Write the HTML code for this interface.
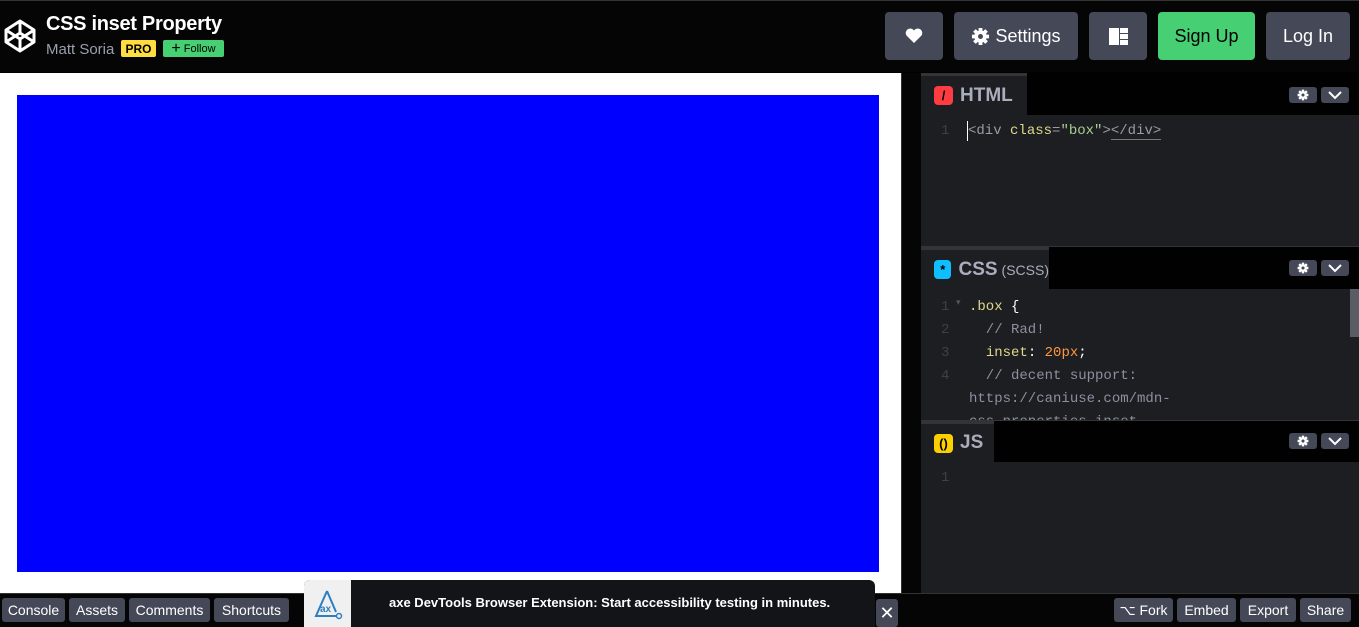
<!DOCTYPE html>
<html><head><meta charset="utf-8">
<style>
*{margin:0;padding:0;box-sizing:border-box}
body{width:1359px;height:627px;overflow:hidden;background:#000;font-family:"Liberation Sans",sans-serif;position:relative}
.a{position:absolute}
.btn{position:absolute;background:#444857;border-radius:4px;color:#fff;display:flex;align-items:center;justify-content:center;font-size:18px}
.mono{font-family:"Liberation Mono",monospace;font-size:14px}
.tab{position:absolute;left:921px;background:#1d1e22;border-top:3px solid #343436;color:#aaaebc;font-weight:bold;font-size:19px;display:flex;align-items:center;padding-left:13px}
.ic{width:19px;height:19px;border-radius:4px;margin-right:7px;display:flex;align-items:center;justify-content:center;font-size:13px;color:#000}
.sb{position:absolute;background:#444857;border-radius:3px;width:28px;height:16px;display:flex;align-items:center;justify-content:center}
.fb{position:absolute;top:598px;height:24px;background:#444857;border-radius:3px;color:#fff;font-size:14px;display:flex;align-items:center;justify-content:center}
.ln{position:absolute;left:941px;color:#3e4049}
</style></head><body>
<div class="a" style="left:0;top:0;width:1359px;height:72px;background:#050505;border-top:1px solid #333"></div>
<svg class="a" style="left:4px;top:19px" width="32" height="34" viewBox="0 0 32 34"><g fill="none" stroke="#fff" stroke-width="3" stroke-linejoin="round"><path d="M16 2 30 11 30 23 16 32 2 23 2 11Z"/><path d="M2 11 16 20 30 11M16 32V20M2 23 16 14 30 23M16 2V14"/></g></svg>
<div class="a" style="left:46px;top:13px;color:#fff;font-weight:bold;font-size:20px;letter-spacing:-0.3px">CSS inset Property</div>
<div class="a" style="left:46px;top:41px;color:#9a9fae;font-size:15px">Matt Soria</div>
<div class="a" style="left:121px;top:40px;width:35px;height:17px;background:#ffdd40;border-radius:2px;font-size:12px;font-weight:bold;display:flex;align-items:center;justify-content:center">PRO</div>
<div class="a" style="left:163px;top:40px;width:61px;height:17px;background:#47cf73;border-radius:2px;font-size:11px;display:flex;align-items:center;justify-content:center"><b style="font-size:16px;margin-right:3px;font-weight:normal">+</b>Follow</div>
<div class="btn" style="left:885px;top:12px;width:58px;height:48px"><svg width="18" height="16" viewBox="0 0 18 16"><path d="M9 15 1.5 7.5A4 4 0 0 1 9 2.5 4 4 0 0 1 16.5 7.5Z" fill="#fff"/></svg></div>
<div class="btn" style="left:954px;top:12px;width:124px;height:48px"><svg width="19" height="19" viewBox="0 0 20 20" style="margin-right:5px"><g fill="#fff"><circle cx="10" cy="10" r="6.5"/><g stroke="#fff" stroke-width="4"><path d="M10 1v18M1 10h18M3.6 3.6l12.8 12.8M16.4 3.6 3.6 16.4"/></g></g><circle cx="10" cy="10" r="2.6" fill="#444857"/></svg>Settings</div>
<div class="btn" style="left:1089px;top:12px;width:58px;height:48px"><svg width="19" height="17" viewBox="0 0 19 17"><rect width="10" height="17" fill="#fff"/><rect x="11" width="8" height="5" fill="#fff"/><rect x="11" y="6" width="8" height="5" fill="#fff"/><rect x="11" y="12" width="8" height="5" fill="#fff"/></svg></div>
<div class="btn" style="left:1158px;top:12px;width:97px;height:48px;background:#47cf73;color:#000">Sign Up</div>
<div class="btn" style="left:1266px;top:12px;width:84px;height:48px">Log In</div>

<div class="a" style="left:0;top:73px;width:901px;height:520px;background:#fff"></div>
<div class="a" style="left:17px;top:95px;width:862px;height:477px;background:#00f"></div>
<div class="a" style="left:901px;top:73px;width:20px;height:520px;background:#050505;border-left:1px solid #333"></div>

<div class="a" style="left:921px;top:73px;width:438px;height:520px;background:#010101"></div>
<div class="tab" style="top:73px;width:106px;height:42px"><div class="ic" style="background:#ff3c41">/</div>HTML</div>
<div class="a" style="left:921px;top:115px;width:438px;height:131px;background:#1d1e22"></div>
<div class="ln mono" style="top:123px">1</div>
<div class="a" style="left:967px;top:121px;width:1px;height:20px;background:#fff"></div>
<div class="a mono" style="left:968px;top:123px;color:#9b9ba6"><span style="color:#9b9ba6">&lt;div</span> <span style="color:#e0d98a">class</span>=<span style="color:#a8cf90">"box"</span>&gt;<span style="border-bottom:1px solid #777">&lt;/div&gt;</span></div>
<div class="a" style="left:921px;top:246px;width:438px;height:1px;background:#343436"></div>
<div class="tab" style="top:247px;width:128px;height:42px"><div class="ic" style="background:#0ebeff">*</div>CSS<span style="font-weight:normal;font-size:14px;margin-left:4px">(SCSS)</span></div>
<div class="a" style="left:921px;top:289px;width:438px;height:131px;background:#1d1e22;overflow:hidden">
<div class="a mono" style="left:20px;top:7px;line-height:23px;color:#3e4049">1<br>2<br>3<br>4</div>
<div class="a" style="left:35px;top:8px;color:#555;font-size:9px">▾</div>
<div class="a mono" style="left:48px;top:7px;line-height:23px;color:#8c90a0;white-space:pre"><span style="color:#e0d98a">.box</span> <span style="color:#fff">{</span>
  // Rad!
  <span style="color:#e0d98a">inset</span><span style="color:#fff">:</span> <span style="color:#ff9640">20px</span><span style="color:#fff">;</span>
  // decent support:
https://caniuse.com/mdn-
css_properties_inset</div>
<div class="a" style="left:429px;top:0;width:9px;height:48px;background:#5a5d66"></div>
</div>
<div class="a" style="left:921px;top:420px;width:438px;height:1px;background:#343436"></div>
<div class="tab" style="top:421px;width:73px;height:41px"><div class="ic" style="background:#fcd000">()</div>JS</div>
<div class="a" style="left:921px;top:462px;width:438px;height:131px;background:#1d1e22"></div>
<div class="ln mono" style="top:470px">1</div>
<div class="sb" style="left:1289px;top:87px"><svg width="12" height="12" viewBox="0 0 20 20"><circle cx="10" cy="10" r="6.5" fill="#fff"/><g stroke="#fff" stroke-width="4"><path d="M10 1v18M1 10h18M3.6 3.6l12.8 12.8M16.4 3.6 3.6 16.4"/></g><circle cx="10" cy="10" r="2.6" fill="#444857"/></svg></div>
<div class="sb" style="left:1321px;top:87px"><svg width="14" height="9" viewBox="0 0 14 9"><path d="M1 1l6 6 6-6" fill="none" stroke="#fff" stroke-width="2"/></svg></div>
<div class="sb" style="left:1289px;top:260px"><svg width="12" height="12" viewBox="0 0 20 20"><circle cx="10" cy="10" r="6.5" fill="#fff"/><g stroke="#fff" stroke-width="4"><path d="M10 1v18M1 10h18M3.6 3.6l12.8 12.8M16.4 3.6 3.6 16.4"/></g><circle cx="10" cy="10" r="2.6" fill="#444857"/></svg></div>
<div class="sb" style="left:1321px;top:260px"><svg width="14" height="9" viewBox="0 0 14 9"><path d="M1 1l6 6 6-6" fill="none" stroke="#fff" stroke-width="2"/></svg></div>
<div class="sb" style="left:1289px;top:433px"><svg width="12" height="12" viewBox="0 0 20 20"><circle cx="10" cy="10" r="6.5" fill="#fff"/><g stroke="#fff" stroke-width="4"><path d="M10 1v18M1 10h18M3.6 3.6l12.8 12.8M16.4 3.6 3.6 16.4"/></g><circle cx="10" cy="10" r="2.6" fill="#444857"/></svg></div>
<div class="sb" style="left:1321px;top:433px"><svg width="14" height="9" viewBox="0 0 14 9"><path d="M1 1l6 6 6-6" fill="none" stroke="#fff" stroke-width="2"/></svg></div>

<div class="a" style="left:0;top:593px;width:1359px;height:34px;background:#050505;border-top:1px solid #333"></div>
<div class="fb" style="left:2px;width:63px">Console</div>
<div class="fb" style="left:69px;width:56px">Assets</div>
<div class="fb" style="left:129px;width:81px">Comments</div>
<div class="fb" style="left:214px;width:75px">Shortcuts</div>
<div class="fb" style="left:1114px;width:59px">⌥ Fork</div>
<div class="fb" style="left:1177px;width:59px">Embed</div>
<div class="fb" style="left:1240px;width:56px">Export</div>
<div class="fb" style="left:1300px;width:51px">Share</div>
<div class="fb" style="left:876px;top:599px;width:22px;height:28px;font-size:18px">✕</div>
<div class="a" style="left:304px;top:580px;width:571px;height:47px;background:#131418;border-radius:6px 6px 0 0;overflow:hidden">
<div class="a" style="left:0;top:0;width:47px;height:47px;background:#f0f0f0"></div>
<svg class="a" style="left:8px;top:8px" width="32" height="32" viewBox="0 0 32 32"><path d="M15 3 4 28h21" fill="none" stroke="#2c7fc1" stroke-width="2"/><path d="M15 3 24 24" stroke="#2c7fc1" stroke-width="2"/><text x="8" y="24" font-family="Liberation Sans" font-size="10" font-weight="bold" fill="#2c7fc1">ax</text><circle cx="27" cy="28" r="2.5" fill="none" stroke="#2c7fc1" stroke-width="1.5"/></svg>
<div class="a" style="left:85px;top:15px;color:#fff;font-weight:bold;font-size:13px;white-space:nowrap">axe DevTools Browser Extension: Start accessibility testing in minutes.</div>
</div>
</body></html>
